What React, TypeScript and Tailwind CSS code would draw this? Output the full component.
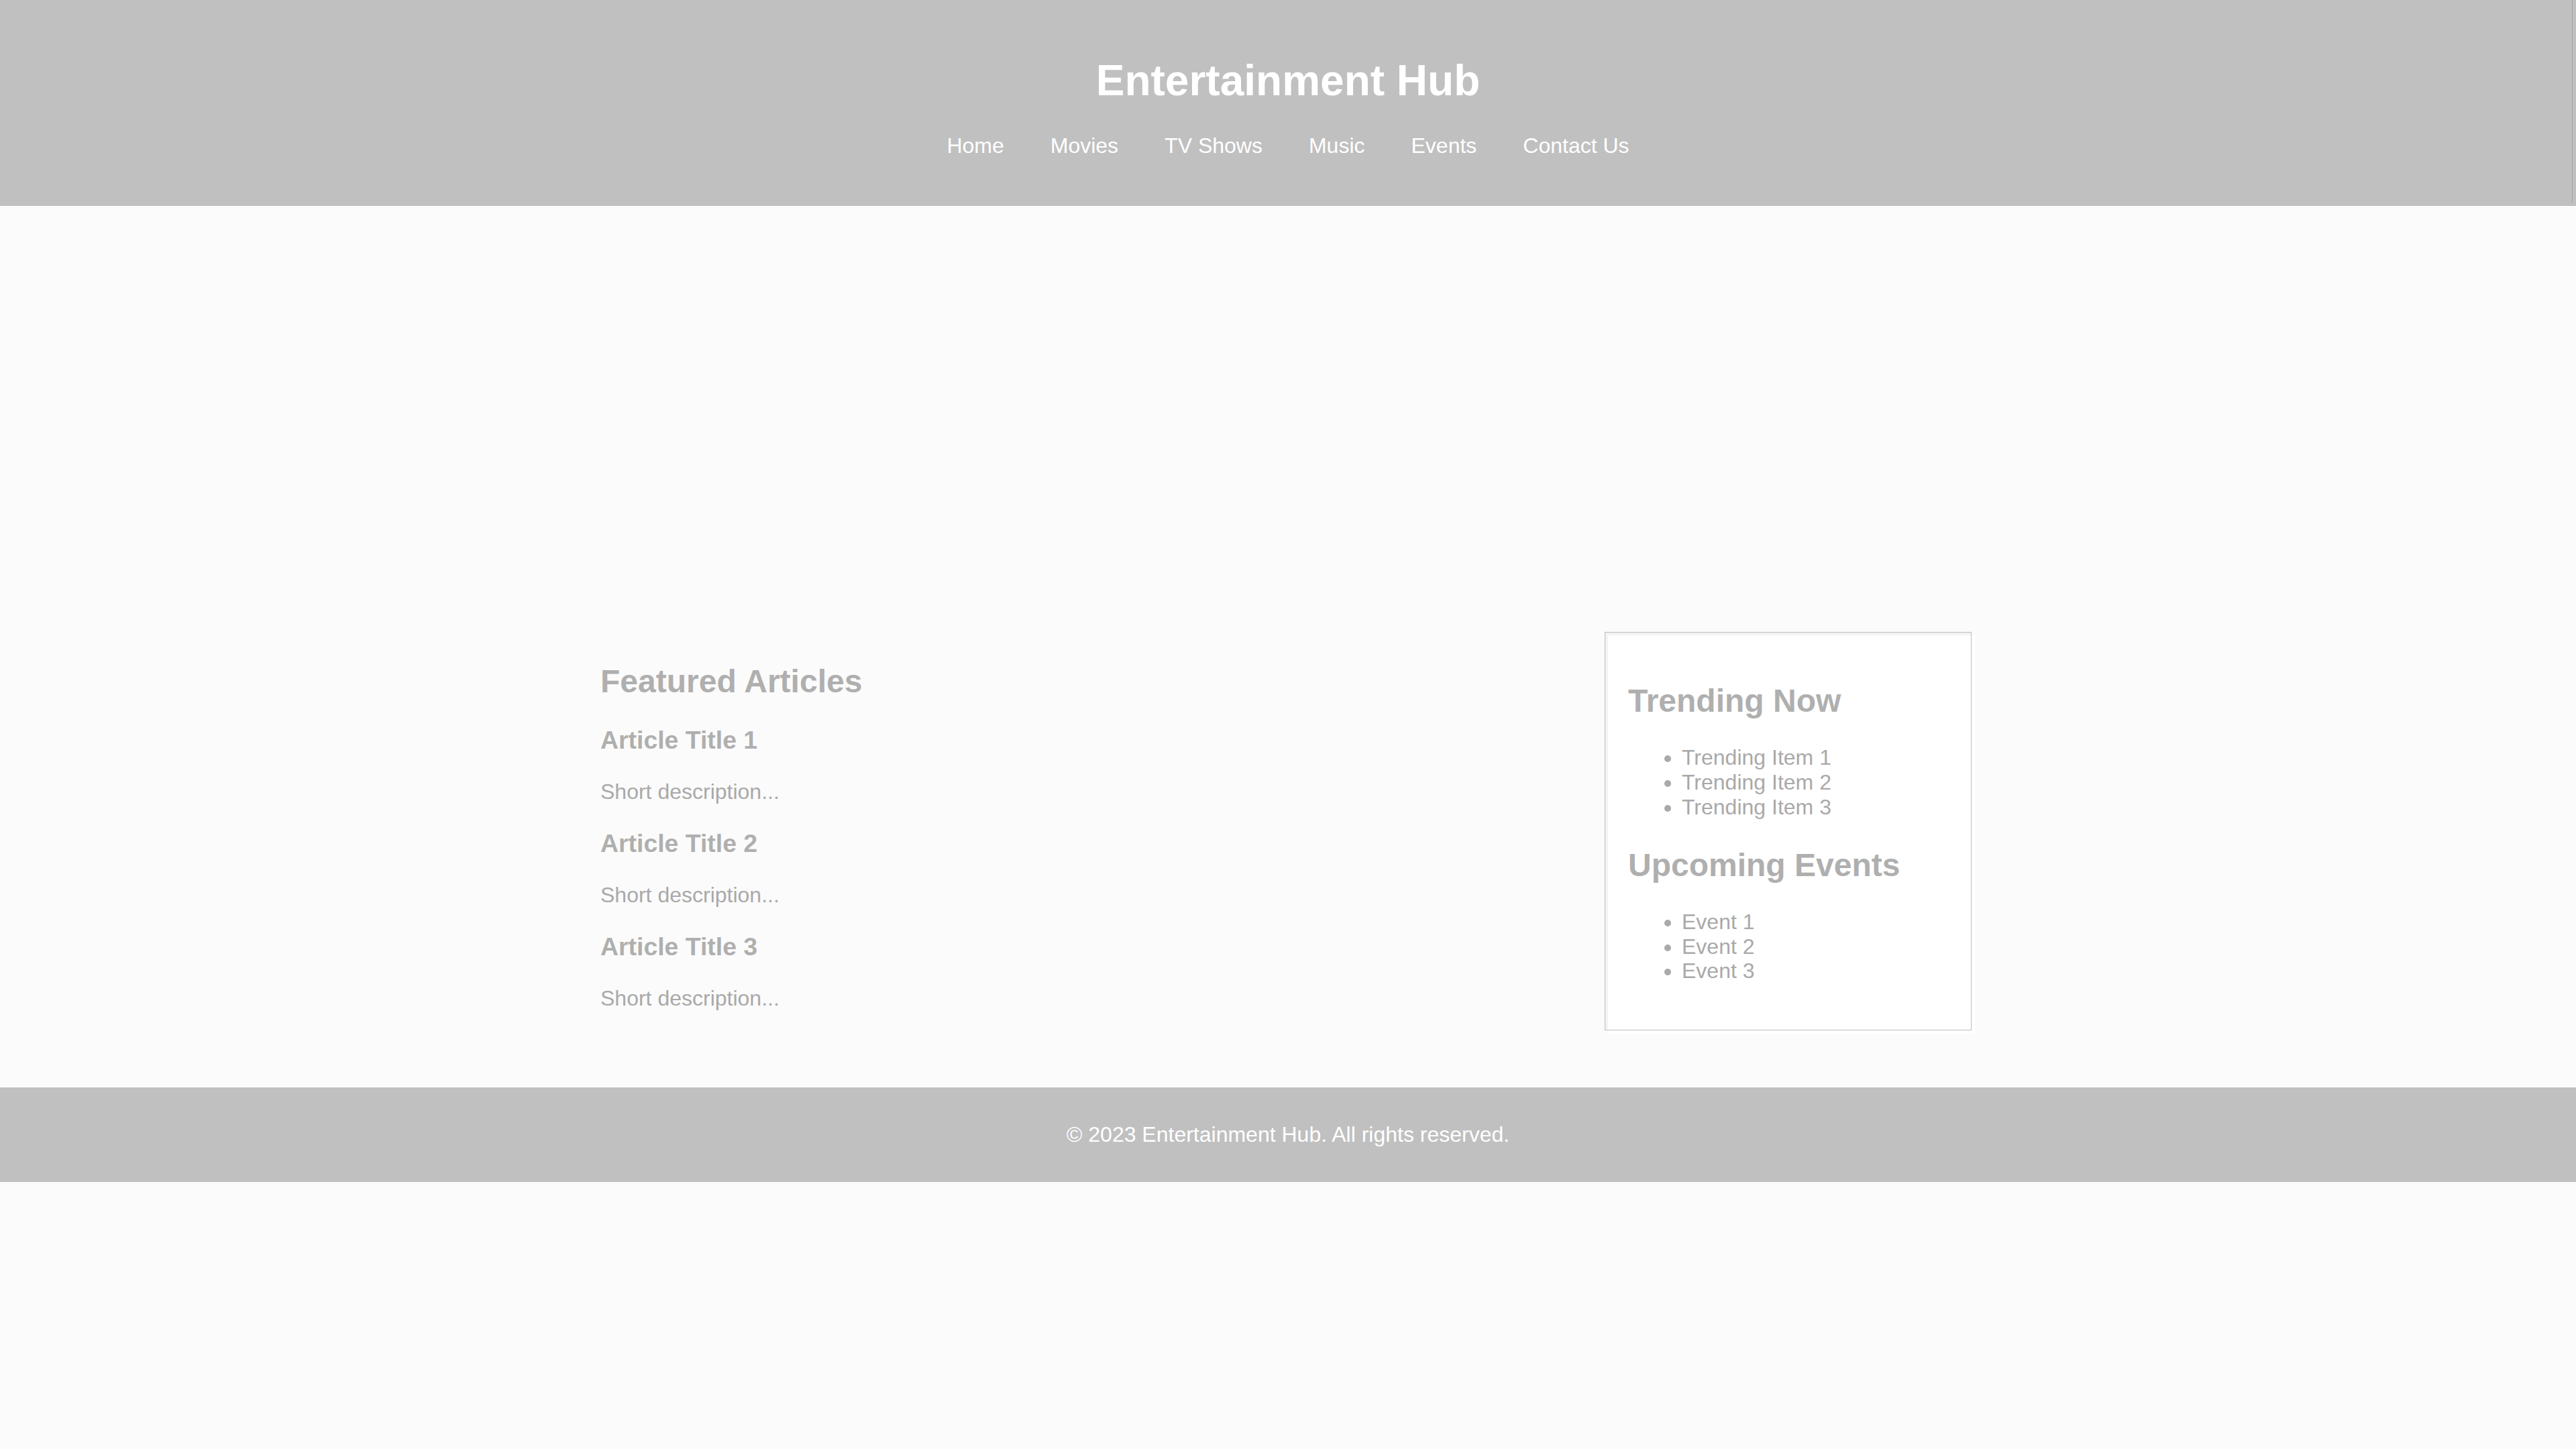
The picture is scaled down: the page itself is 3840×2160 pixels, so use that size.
const navLinks = ['Home', 'Movies', 'TV Shows', 'Music', 'Events', 'Contact Us']

const articles = [
  { title: 'Article Title 1', text: 'Short description...' },
  { title: 'Article Title 2', text: 'Short description...' },
  { title: 'Article Title 3', text: 'Short description...' },
]

const trending = ['Trending Item 1', 'Trending Item 2', 'Trending Item 3']
const events = ['Event 1', 'Event 2', 'Event 3']

function Header() {
  return (
    <header className="relative h-[307px] bg-[#c0c0c0] pt-[84px] text-center text-white">
      <h1 className="text-[64px] font-bold leading-[1.15]">Entertainment Hub</h1>
      <nav className="mt-[41px]">
        <ul className="flex justify-center gap-[69px] text-[32px] leading-[1.15]">
          {navLinks.map((link) => (
            <li key={link}>
              <a href="#">{link}</a>
            </li>
          ))}
        </ul>
      </nav>
      {/* faint edge line at the right of the bar */}
      <div className="absolute right-[5px] top-0 h-[302px] w-px bg-[#a3a3a3]" />
    </header>
  )
}

function Sidebar() {
  return (
    <aside className="w-[547px] border border-[#bdbdbd] bg-white px-[34px] pt-[74px] pb-[69px] shadow-[inset_4px_4px_0_#f3f3f3,5px_5px_0_#ffffff]">
      <h2 className="text-[48px] font-bold leading-[1.15] text-[#afafaf]">Trending Now</h2>
      <ul className="mt-[39px] list-disc pl-[80px] text-[32px] leading-[1.15] text-[#a9a9a9]">
        {trending.map((item) => (
          <li key={item}>{item}</li>
        ))}
      </ul>
      <h2 className="mt-[40px] text-[48px] font-bold leading-[1.15] text-[#afafaf]">Upcoming Events</h2>
      <ul className="mt-[39px] list-disc pl-[80px] text-[32px] leading-[1.15] text-[#a9a9a9]">
        {events.map((item) => (
          <li key={item}>{item}</li>
        ))}
      </ul>
    </aside>
  )
}

export default function App() {
  return (
    <div className="min-h-screen bg-[#fbfbfb] font-['Liberation_Sans',Arial,sans-serif]">
      <Header />

      {/* hero area (empty) */}
      <section className="h-[635px]" />

      <div className="mx-auto mb-[85px] flex w-[2050px] items-start justify-between pr-[6px]">
        <main className="pt-[46px]">
          <h2 className="mb-[39px] text-[48px] font-bold leading-[1.15] text-[#afafaf]">
            Featured Articles
          </h2>
          <div className="flex flex-col gap-[37px]">
            {articles.map((a) => (
              <article key={a.title}>
                <h3 className="mb-[37px] text-[37.4px] font-bold leading-[1.15] text-[#afafaf]">
                  {a.title}
                </h3>
                <p className="text-[32px] leading-[1.15] text-[#a9a9a9]">{a.text}</p>
              </article>
            ))}
          </div>
        </main>
        <Sidebar />
      </div>

      <footer className="flex h-[141px] items-center justify-center bg-[#c0c0c0] text-[32px] leading-[1.15] text-white">
        <p>© 2023 Entertainment Hub. All rights reserved.</p>
      </footer>
    </div>
  )
}
